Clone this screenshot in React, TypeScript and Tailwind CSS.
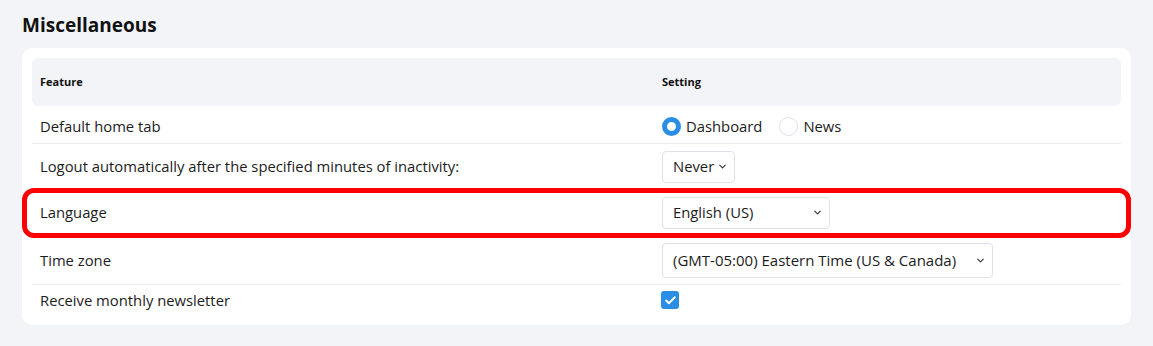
import { ChevronDown, Check } from "lucide-react";

function Select({ value, width }: { value: string; width: string }) {
    return (
        <div className={`flex h-[32px] items-center justify-between rounded-[4px] border border-[#dfe2e8] bg-white pl-[10px] pr-[6px] ${width}`}>
            <span className="text-[14.8px] text-[#1c1c1c]">{value}</span>
            <ChevronDown className="h-[11px] w-[11px] text-[#333]" strokeWidth={2.4} />
        </div>
    );
}

function Radio({ label, checked }: { label: string; checked?: boolean }) {
    return (
        <label className="flex items-center gap-[5px]">
            {checked ? (
                <span className="h-[19px] w-[19px] rounded-full border-[5px] border-[#2a8ee4] bg-white" />
            ) : (
                <span className="h-[19px] w-[19px] rounded-full border border-[#dfe2e8] bg-white" />
            )}
            <span className="text-[14.8px] text-[#1c1c1c]">{label}</span>
        </label>
    );
}

export default function App() {
    return (
        <div className="min-h-screen bg-[#f3f4f8] px-[22px] pt-[12px] font-['Open_Sans',sans-serif]">

            {/* Title */}
            <h2 className="text-[19px] font-bold leading-[26px] text-[#111]">Miscellaneous</h2>

            {/* Card */}
            <div className="mt-[10px] rounded-[10px] bg-white p-[10px]">
                <div className="flex h-[48px] items-center rounded-[6px] bg-[#f3f4f8] px-[8px] text-[11px] font-bold text-[#111]">
                    <div className="w-[622px]">Feature</div>
                    <div>Setting</div>
                </div>

                <div className="flex h-[38px] items-center border-b border-[#eceef3] px-[8px] pt-[4px]">
                    <div className="w-[622px] text-[14.8px] text-[#1c1c1c]">Default home tab</div>
                    <div className="flex items-center gap-[17px]">
                        <Radio label="Dashboard" checked />
                        <Radio label="News" />
                    </div>
                </div>

                <div className="flex h-[46px] items-center border-b border-[#eceef3] px-[8px]">
                    <div className="w-[622px] text-[14.8px] text-[#1c1c1c]">Logout automatically after the specified minutes of inactivity:</div>
                    <Select value="Never" width="w-[73px]" />
                </div>

                {/* Highlighted row */}
                <div className="relative flex h-[46px] items-center border-b border-[#eceef3] px-[8px]">
                    <div className="w-[622px] text-[14.8px] text-[#1c1c1c]">Language</div>
                    <Select value="English (US)" width="w-[168px]" />
                    <div className="pointer-events-none absolute -inset-x-[10px] -top-[2px] -bottom-[3px] rounded-[12px] border-[5px] border-[#ff0000]" />
                </div>

                <div className="flex h-[49px] items-center border-b border-[#eceef3] px-[8px]">
                    <div className="w-[622px] text-[14.8px] text-[#1c1c1c]">Time zone</div>
                    <div className="flex h-[35px] w-[331px] items-center justify-between rounded-[4px] border border-[#dfe2e8] bg-white pl-[10px] pr-[6px]">
                        <span className="text-[15px] text-[#1c1c1c]">(GMT-05:00) Eastern Time (US &amp; Canada)</span>
                        <ChevronDown className="h-[11px] w-[11px] text-[#333]" strokeWidth={2.4} />
                    </div>
                </div>

                <div className="flex h-[30px] items-center px-[8px]">
                    <div className="w-[622px] text-[14.8px] text-[#1c1c1c]">Receive monthly newsletter</div>
                    <span className="-ml-[1px] flex h-[18px] w-[18px] items-center justify-center rounded-[3px] bg-[#2a8ee4]">
                        <Check className="h-[13px] w-[13px] text-white" strokeWidth={3.5} />
                    </span>
                </div>
            </div>
        </div>
    );
}
